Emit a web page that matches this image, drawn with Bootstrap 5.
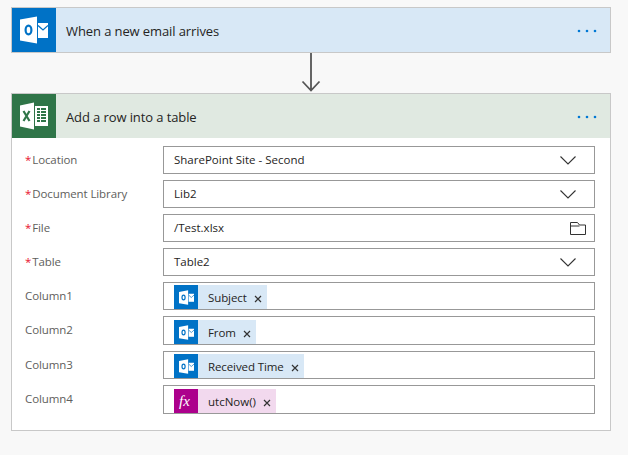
<!DOCTYPE html>
<html lang="en">
<head>
    <meta charset="UTF-8">
    <title>Flow editor</title>
    <meta name="viewport" content="width=device-width, initial-scale=1">
    <link href="https://cdn.jsdelivr.net/npm/bootstrap@5.3.3/dist/css/bootstrap.min.css" rel="stylesheet">
    <style>
        html, body {
            height: 100%;
        }

        body {
            background: #f8f8f8;
            color: #252423;
            font-family: "Open Sans", "Liberation Sans", sans-serif;
            font-size: 12px;
            padding: 7px 17px 0 11px;
            overflow: hidden;
        }

        .flow-card {
            border: 1px solid #c8c8c8;
            border-radius: 0;
            background: #fff;
        }

        .flow-head {
            height: 44px;
        }

        .head-mail {
            background: #d8e8f6;
        }

        .head-excel {
            background: #e0e9e1;
        }

        .head-icon {
            width: 44px;
            height: 44px;
        }

        .bg-mail {
            background: #0072c6;
        }

        .bg-excel {
            background: #2f7548;
        }

        .bg-fx {
            background: #ac008c;
        }

        .head-title {
            font-size: 13px;
            margin-left: 10px;
            padding-top: 4px;
            letter-spacing: -.1px;
        }

        .head-dots {
            width: 20px;
            margin-right: 13px;
            margin-top: 2px;
        }

        .arrow-gap {
            height: 40px;
        }

        .form-area {
            padding: 8px 15px 16px 13px;
        }

        .field-row {
            margin-bottom: 6px;
        }

        .field-row:last-child {
            margin-bottom: 0;
        }

        .field-label {
            width: 138px;
            color: #605e5c;
            font-size: 11.5px;
            letter-spacing: -.1px;
            line-height: 28px;
        }

        .req {
            color: #e8112d;
            margin-right: 1px;
        }

        .field-box {
            height: 28px;
            border: 1px solid #989898;
            padding: 0 10px;
            font-size: 11.5px;
        }

        .pick-arrow {
            margin-right: 8px;
        }

        .pick-folder {
            margin-right: -2px;
        }

        .chip-box {
            padding-top: 2px;
            padding-bottom: 0;
            align-items: flex-start;
            letter-spacing: -.1px;
        }

        .chip-tall {
            height: 29px;
            padding-top: 3px;
        }

        .token {
            height: 24px;
            line-height: 24px;
            padding-right: 5px;
        }

        .token-mail {
            background: #d8e8f6;
        }

        .token-fx {
            background: #f2d9ee;
            letter-spacing: 0;
        }

        .token-icon {
            width: 24px;
            height: 24px;
            margin-right: 10px;
        }

        .token-text {
            margin-top: 2px;
        }

        .token-x {
            margin-left: 7px;
            margin-top: 3px;
        }
    </style>
</head>

<body>
    <svg width="0" height="0" class="position-absolute">
        <symbol id="outlook-glyph" viewBox="0 0 28 28">
            <path fill="#fff" d="M0 3.500 17 .5v27L0 24.500z"/>
            <path fill="#fff" d="M18 7h10v15H18z"/>
            <path fill="none" stroke="#0072c6" stroke-width="1.300" d="M18 9.500l5 4.500 5-4.500"/>
            <ellipse cx="8.500" cy="14" rx="2.900" ry="4.300" fill="none" stroke="#0072c6" stroke-width="2.200"/>
        </symbol>
        <symbol id="chevron" viewBox="0 0 16 9">
            <path fill="none" stroke="#333" stroke-width="1.100" d="M.5.5 8 8 15.500.5"/>
        </symbol>
        <symbol id="close-x" viewBox="0 0 8 8">
            <path fill="none" stroke="#333" stroke-width="1.200" d="M1 1l6 6M7 1 1 7"/>
        </symbol>
        <symbol id="three-dots" viewBox="0 0 20 4">
            <g fill="#0078d4"><circle cx="2" cy="2" r="1.300"/><circle cx="10" cy="2" r="1.300"/><circle cx="18" cy="2" r="1.300"/></g>
        </symbol>
    </svg>

    <!-- Trigger -->
    <div class="card flow-card">
        <div class="d-flex align-items-center flow-head head-mail">
            <div class="head-icon bg-mail d-flex align-items-center justify-content-center">
                <svg width="28" height="28"><use href="#outlook-glyph"/></svg>
            </div>
            <div class="head-title flex-grow-1">When a new email arrives</div>
            <svg class="head-dots" height="4"><use href="#three-dots"/></svg>
        </div>
    </div>

    <div class="arrow-gap d-flex justify-content-center">
        <svg width="20" height="40" viewBox="0 0 20 40">
            <path fill="none" stroke="#555" stroke-width="1.800" d="M10 0v38M1.500 28.500l8.500 9 8.500-9"/>
        </svg>
    </div>

    <!-- Action -->
    <div class="card flow-card">
        <div class="d-flex align-items-center flow-head head-excel">
            <div class="head-icon bg-excel d-flex align-items-center justify-content-center">
                <svg width="28" height="28" viewBox="0 0 28 28">
                    <path fill="#fff" d="M0 3.500 14 .5v27L0 24.500z"/>
                    <path fill="#fff" d="M15 4h13v20H15z"/>
                    <path fill="#2f7548" d="M17 6h3v2h-3zm4 0h5v2h-5zm-4 3h3v2h-3zm4 0h5v2h-5zm-4 3h3v2h-3zm4 0h5v2h-5zm-4 3h3v2h-3zm4 0h5v2h-5zm-4 3h3v2h-3zm4 0h5v2h-5z"/>
                    <path fill="none" stroke="#2f7548" stroke-width="2.200" d="M3.500 9l6 10M9.500 9l-6 10"/>
                </svg>
            </div>
            <div class="head-title flex-grow-1">Add a row into a table</div>
            <svg class="head-dots" height="4"><use href="#three-dots"/></svg>
        </div>

        <div class="form-area">
            <div class="field-row d-flex">
                <div class="field-label"><span class="req">*</span>Location</div>
                <div class="field-box flex-grow-1 d-flex align-items-center justify-content-between">
                    <span>SharePoint Site - Second</span>
                    <svg width="16" height="9" class="pick-arrow"><use href="#chevron"/></svg>
                </div>
            </div>
            <div class="field-row d-flex">
                <div class="field-label"><span class="req">*</span>Document Library</div>
                <div class="field-box flex-grow-1 d-flex align-items-center justify-content-between">
                    <span>Lib2</span>
                    <svg width="16" height="9" class="pick-arrow"><use href="#chevron"/></svg>
                </div>
            </div>
            <div class="field-row d-flex">
                <div class="field-label"><span class="req">*</span>File</div>
                <div class="field-box flex-grow-1 d-flex align-items-center justify-content-between">
                    <span>/Test.xlsx</span>
                    <svg width="16" height="13" viewBox="0 0 16 13" class="pick-folder">
                        <path fill="none" stroke="#333" d="M.5.500h7l2 2.500h6v9.500H.5zM.5 4h9"/>
                    </svg>
                </div>
            </div>
            <div class="field-row d-flex">
                <div class="field-label"><span class="req">*</span>Table</div>
                <div class="field-box flex-grow-1 d-flex align-items-center justify-content-between">
                    <span>Table2</span>
                    <svg width="16" height="9" class="pick-arrow"><use href="#chevron"/></svg>
                </div>
            </div>
            <div class="field-row d-flex">
                <div class="field-label">Column1</div>
                <div class="field-box chip-box flex-grow-1 d-flex">
                    <div class="token token-mail d-flex align-items-center">
                        <div class="token-icon bg-mail d-flex align-items-center justify-content-center">
                            <svg width="15" height="15"><use href="#outlook-glyph"/></svg>
                        </div>
                        <span class="token-text">Subject</span>
                        <svg width="8" height="8" class="token-x"><use href="#close-x"/></svg>
                    </div>
                </div>
            </div>
            <div class="field-row d-flex">
                <div class="field-label">Column2</div>
                <div class="field-box chip-box chip-tall flex-grow-1 d-flex">
                    <div class="token token-mail d-flex align-items-center">
                        <div class="token-icon bg-mail d-flex align-items-center justify-content-center">
                            <svg width="15" height="15"><use href="#outlook-glyph"/></svg>
                        </div>
                        <span class="token-text">From</span>
                        <svg width="8" height="8" class="token-x"><use href="#close-x"/></svg>
                    </div>
                </div>
            </div>
            <div class="field-row d-flex">
                <div class="field-label">Column3</div>
                <div class="field-box chip-box flex-grow-1 d-flex">
                    <div class="token token-mail d-flex align-items-center">
                        <div class="token-icon bg-mail d-flex align-items-center justify-content-center">
                            <svg width="15" height="15"><use href="#outlook-glyph"/></svg>
                        </div>
                        <span class="token-text">Received Time</span>
                        <svg width="8" height="8" class="token-x"><use href="#close-x"/></svg>
                    </div>
                </div>
            </div>
            <div class="field-row d-flex">
                <div class="field-label">Column4</div>
                <div class="field-box chip-box chip-tall flex-grow-1 d-flex">
                    <div class="token token-fx d-flex align-items-center">
                        <div class="token-icon bg-fx d-flex align-items-center justify-content-center">
                            <svg width="18" height="18" viewBox="0 0 18 18">
                                <text x="2" y="14" fill="#fff" font-family="Liberation Serif, serif" font-style="italic" font-size="15">fx</text>
                            </svg>
                        </div>
                        <span class="token-text">utcNow()</span>
                        <svg width="8" height="8" class="token-x"><use href="#close-x"/></svg>
                    </div>
                </div>
            </div>
        </div>
    </div>
</body>
</html>
